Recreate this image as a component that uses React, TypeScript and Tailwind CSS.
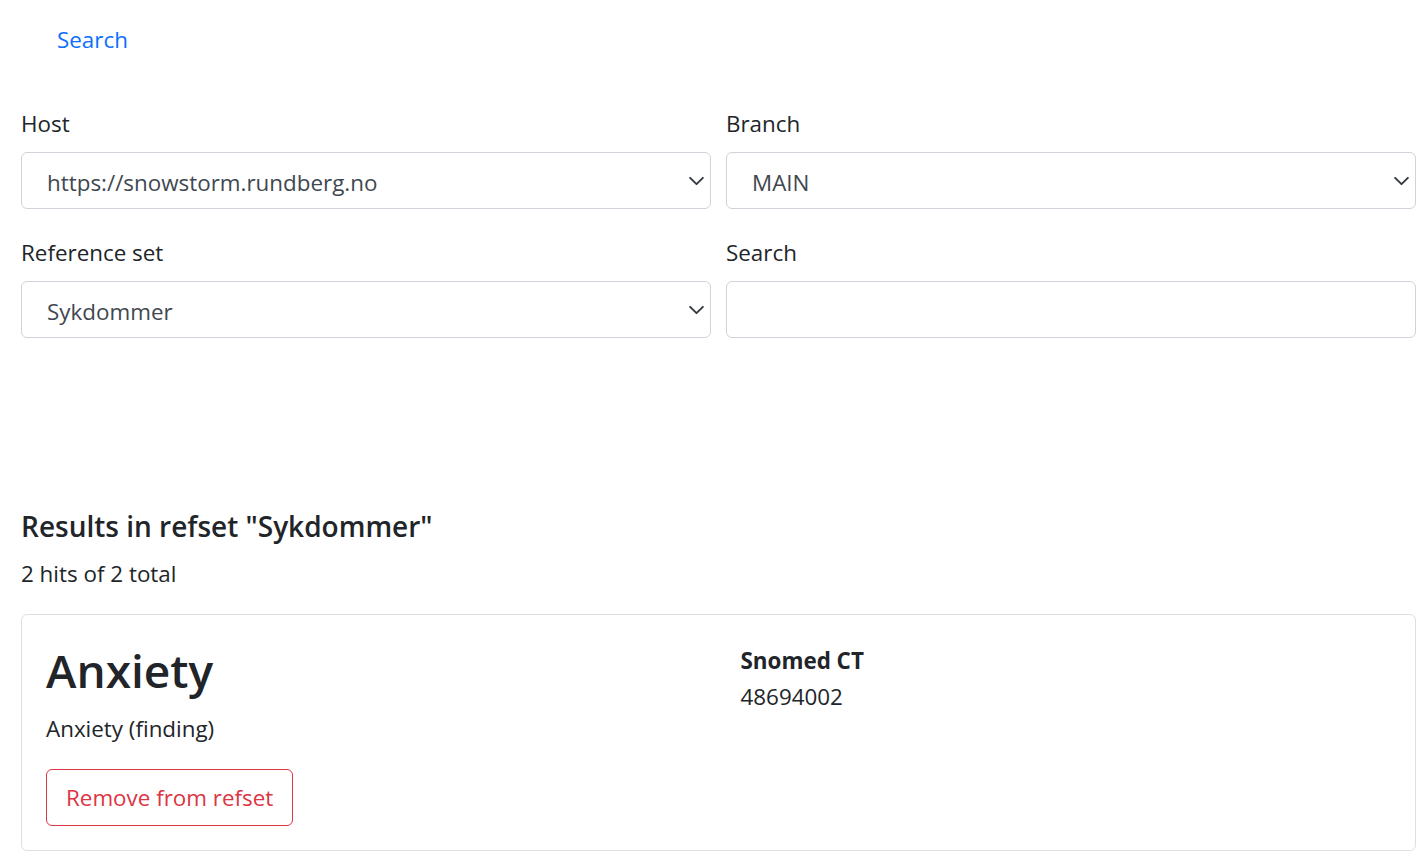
import { useState } from "react";

const font = { fontFamily: '"Open Sans", "Noto Sans", Arial, sans-serif' };

const Chevron = () => (
  <svg
    viewBox="0 0 16 16"
    className="absolute right-[6px] top-1/2 -translate-y-1/2 w-[17px] h-[17px] pointer-events-none"
  >
    <path
      fill="none"
      stroke="#343a40"
      strokeLinecap="round"
      strokeLinejoin="round"
      strokeWidth="1.8"
      d="m2 5 6 6 6-6"
    />
  </svg>
);

const SelectField: React.FC<{ label: string; value: string }> = ({ label, value }) => {
  return (
    <div className="flex flex-col">
      <label className="leading-[36px] mb-[10px]">{label}</label>
      <div className="relative">
        <select
          defaultValue={value}
          className="appearance-none w-full h-[57px] border border-[#ced4da] rounded-[6px] pl-[25px] pr-12 pt-[4px] text-[#3f4850] bg-white outline-none"
        >
          <option>{value}</option>
        </select>
        <Chevron />
      </div>
    </div>
  );
};

export default function App() {
  const [query, setQuery] = useState("");

  return (
    <div
      className="min-h-[862px] bg-white text-[#212529] text-[22.4px] px-[21px] pr-[12px]"
      style={font}
    >
      <nav className="pt-[22px] pl-[36px]">
        <a href="#" className="text-[#0d6efd] leading-[36px]">
          Search
        </a>
      </nav>

      <div className="mt-[48px] grid grid-cols-2 gap-x-[15px] gap-y-[26px]">
        <SelectField label="Host" value="https://snowstorm.rundberg.no" />
        <SelectField label="Branch" value="MAIN" />
        <SelectField label="Reference set" value="Sykdommer" />
        <div className="flex flex-col">
          <label className="leading-[36px] mb-[10px]">Search</label>
          <input
            value={query}
            onChange={(e) => setQuery(e.target.value)}
            className="w-full h-[57px] border border-[#ced4da] rounded-[6px] px-[25px] outline-none"
          />
        </div>
      </div>

      <h4 className="mt-[170px] text-[28px] font-semibold leading-[36px]">
        Results in refset "Sykdommer"
      </h4>
      <p className="mt-[12px] leading-[36px]">2 hits of 2 total</p>

      <div className="mt-[22px] border border-[#dfdfdf] rounded-[6px] px-[24px] pt-[24px] pb-[24px] grid grid-cols-2 gap-x-[44px]">
        <div>
          <h1 className="text-[46px] font-semibold leading-[62px]">Anxiety</h1>
          <p className="mt-[10px] leading-[36px]">Anxiety (finding)</p>
          <button className="mt-[22px] h-[57px] px-[19px] border border-[#dc3545] text-[#dc3545] rounded-[6px]">
            Remove from refset
          </button>
        </div>
        <div className="pt-[4px]">
          <div className="font-bold leading-[36px]">Snomed CT</div>
          <div className="leading-[36px]">48694002</div>
        </div>
      </div>
    </div>
  );
}
